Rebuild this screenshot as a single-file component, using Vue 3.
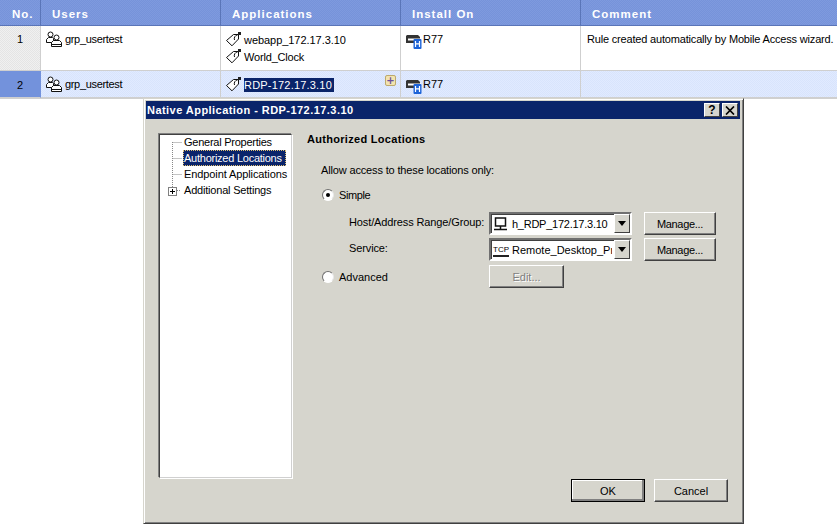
<script setup>
const gridCols = ['No.', 'Users', 'Applications', 'Install On', 'Comment']
</script>

<template>
  <div class="page">
    <div class="grid">
      <div class="head no">No.</div>
      <div class="head">{{ gridCols[1] }}</div>
      <div class="head">{{ gridCols[2] }}</div>
      <div class="head">{{ gridCols[3] }}</div>
      <div class="head last">{{ gridCols[4] }}</div>

      <div class="cell num">1</div>
      <div class="cell"><div class="item"><svg class="ic users" viewBox="0 0 17 16"><use href="#ug" /></svg><span class="grp">grp_usertest</span></div></div>
      <div class="cell">
        <div class="item app"><svg class="ic" viewBox="0 0 16 16"><use href="#tag" /></svg><span class="t-web">webapp_172.17.3.10</span></div>
        <div class="item app"><svg class="ic" viewBox="0 0 16 16"><use href="#tag" /></svg><span class="t-wc">World_Clock</span></div>
      </div>
      <div class="cell"><div class="item gw"><svg class="ic gwi" viewBox="0 0 17 16"><use href="#gw" /></svg><span>R77</span></div></div>
      <div class="cell last"><span class="comment">Rule created automatically by Mobile Access wizard.</span></div>

      <div class="cell num sel">2</div>
      <div class="cell hl"><div class="item"><svg class="ic users" viewBox="0 0 17 16"><use href="#ug" /></svg><span class="grp">grp_usertest</span></div></div>
      <div class="cell hl appcell">
        <div class="item app"><svg class="ic" viewBox="0 0 16 16"><use href="#tag" /></svg><span class="mark">RDP-172.17.3.10</span></div>
        <span class="plus">+</span>
      </div>
      <div class="cell hl"><div class="item gw"><svg class="ic gwi" viewBox="0 0 17 16"><use href="#gw" /></svg><span>R77</span></div></div>
      <div class="cell hl last"></div>
    </div>

    <svg class="defs" width="0" height="0">
      <defs>
        <g id="ug" fill="#fff" stroke="#111" stroke-width="1">
          <circle cx="5.500" cy="3.500" r="2.500" />
          <path d="M1.500 11.500v-3l2-2h4l1 1v4z" />
          <circle cx="11.500" cy="6.500" r="2.500" />
          <path d="M6.500 15.500v-4l2-2h6l2 2v4zM6.500 13.500h10" />
        </g>
        <g id="tag" fill="#fff" stroke="#111" stroke-width="1">
          <path d="M.5 8.500 7.500 2.500h5v4.500l-6.500 6.800z" />
          <path d="M8.500 8c-.8-2.500.5-4.500 3.500-5.500l2-1.500" fill="none" />
          <path d="M12 0h3v3h-3z" fill="#222" stroke="none" />
        </g>
        <g id="gw">
          <path d="M2 2h11l2 2v6H1V3z" fill="#333" />
          <path d="M3 5.500h13v2H3z" fill="#fff" />
          <rect x="8.500" y="6" width="8" height="10" rx="1" fill="#1c63d8" />
          <path d="M10.500 8v6M14.500 8v6M10.500 10.800h4" stroke="#fff" stroke-width="1.200" fill="none" />
        </g>
      </defs>
    </svg>

    <section class="dialog">
      <header class="titlebar">
        <span class="title">Native Application - RDP-172.17.3.10</span>
        <div class="caps">
          <span class="cap">?</span>
          <span class="cap x">
            <svg viewBox="0 0 10 9" width="10" height="9"><path d="M1 0.500 9 8.500M9 0.500 1 8.500" stroke="#000" stroke-width="1.700" /></svg>
          </span>
        </div>
      </header>

      <div class="body">
        <div class="main">
          <nav class="tree">
            <svg class="dots" width="12" height="50" viewBox="0 0 12 50">
              <path d="M.5 0v45M.5 .5h9M.5 16.500h9M.5 32.500h9M5 48.500h4" stroke="#888" stroke-dasharray="1 1" fill="none" />
            </svg>
            <span class="node n1">General Properties</span>
            <span class="node n2">Authorized Locations</span>
            <span class="node n3">Endpoint Applications</span>
            <span class="node n4">Additional Settings</span>
            <span class="expander"></span>
          </nav>

          <div class="panel">
            <h2>Authorized Locations</h2>
            <p class="lead">Allow access to these locations only:</p>
            <div class="form">
              <label class="radio-row simple"><span class="radio on"></span><span class="t-simple">Simple</span></label>
              <div class="row host">
                <span class="lbl">Host/Address Range/Group:</span>
                <div class="combo">
                  <svg class="net" width="15" height="14" viewBox="0 0 15 14">
                    <path d="M2.500 1h10v8h-10z" fill="#fff" stroke="#111" stroke-width="1.500" />
                    <path d="M7.500 9v3M1 12.500h13" stroke="#111" stroke-width="1.500" />
                  </svg>
                  <span class="val hostval">h_RDP_172.17.3.10</span>
                  <span class="arrow"></span>
                </div>
                <button class="btn manage">Manage...</button>
              </div>
              <div class="row service">
                <span class="lbl">Service:</span>
                <div class="combo">
                  <span class="tcp">TCP</span>
                  <span class="val clip">Remote_Desktop_Protocol</span>
                  <span class="arrow"></span>
                </div>
                <button class="btn manage">Manage...</button>
              </div>
              <div class="row adv">
                <label class="radio-row"><span class="radio"></span>Advanced</label>
                <button class="btn edit" disabled>Edit...</button>
              </div>
            </div>
          </div>
        </div>
        <footer class="actions">
          <button class="btn dlg default">OK</button>
          <button class="btn dlg">Cancel</button>
        </footer>
      </div>
    </section>
  </div>
</template>

<style>
body { margin: 0; background: #fff; }
</style>

<style scoped>
.page {
  position: relative;
  width: 837px;
  height: 532px;
  overflow: hidden;
  background: #fff;
  font-family: "Liberation Sans", Arial, sans-serif;
  font-size: 11px;
  color: #000;
}
.defs { position: absolute; }
.grid {
  display: grid;
  grid-template-columns: 41px 180px 180px 180px 256px;
  grid-template-rows: 26px 45px 27px;
  border-bottom: 1px solid #d0d0d0;
}
.head {
  background: #7a96db conic-gradient(#7f9ade 25%, #7693da 0 50%, #7f9ade 0 75%, #7693da 0) 0 0 / 2px 2px;
  border-right: 1px solid #5a75b8;
  border-bottom: 1px solid #5a75b8;
  color: #fff;
  font-family: "Liberation Sans", sans-serif;
  font-weight: 700;
  font-size: 11.5px;
  line-height: 14px;
  letter-spacing: 1px;
  padding: 7px 0 0 11px;
  box-sizing: border-box;
}
.head.no { padding-left: 12px; }
.head.last, .cell.last { border-right: 0; }
.cell {
  border-right: 1px solid #cfcfcf;
  border-bottom: 1px solid #cfcfcf;
  box-sizing: border-box;
  padding: 6px 0 0 4px;
  line-height: 14px;
  min-width: 0;
}
.cell.num {
  text-align: center;
  background: #ececec conic-gradient(#f0f0f0 25%, #e4e4e4 0 50%, #f0f0f0 0 75%, #e4e4e4 0) 0 0 / 2px 2px;
  padding: 6px 0 0;
}
.cell.num.sel {
  background: #7392dc;
  border-right-color: #7392dc;
  padding-top: 7px;
}
.cell.hl {
  background: #dce7ff conic-gradient(#e1eaff 25%, #d8e4fc 0 50%, #e1eaff 0 75%, #d8e4fc 0) 0 0 / 2px 2px;
  padding-top: 6px;
}
.comment { padding-left: 2px; white-space: nowrap; letter-spacing: -0.18px; }
.grp { letter-spacing: -0.33px; }
.t-web { letter-spacing: -0.05px; }
.t-wc { letter-spacing: -0.18px; }
.item { display: flex; align-items: center; gap: 3px; height: 14px; white-space: nowrap; }
.item.app { height: 18px; margin-top: -1px; gap: 2px; padding-left: 1px; }
.ic { width: 16px; height: 16px; flex: none; overflow: visible; }
.users { width: 17px; }
.gw { gap: 1px; }
.gwi { width: 17px; margin-top: 3px; }
.mark {
  background: #0a246a;
  color: #fff;
  width: 90px;
  line-height: 14px;
  letter-spacing: 0.2px;
}
.appcell { position: relative; }
.plus {
  position: absolute;
  right: 4px;
  top: 4px;
  width: 9px;
  height: 9px;
  border: 1px solid #bda96c;
  border-radius: 2px;
  background: #f2e3b0;
  color: #6a4f9a;
  font: 700 10px/9px "DejaVu Sans", sans-serif;
  text-align: center;
}

.dialog {
  position: absolute;
  left: 143px;
  top: 98px;
  width: 601px;
  height: 426px;
  box-sizing: border-box;
  background: #d6d5cd;
  border: 1px solid #d6d5cd;
  border-right-color: #404040;
  border-bottom-color: #404040;
  box-shadow: inset 1px 1px 0 #fff, inset -1px -1px 0 #808080;
  padding: 2px 3px 3px 2px;
  display: flex;
  flex-direction: column;
}
.titlebar {
  height: 18px;
  flex: none;
  background: #0a246a;
  color: #fff;
  display: flex;
  align-items: center;
  justify-content: space-between;
  padding: 0 2px 0 1px;
}
.title { font-family: "Liberation Sans", sans-serif; font-weight: 700; font-size: 11px; letter-spacing: 0.45px; }
.caps { display: flex; gap: 2px; }
.cap {
  width: 16px;
  height: 14px;
  box-sizing: border-box;
  background: #d6d5cd;
  border: 1px solid;
  border-color: #fff #404040 #404040 #fff;
  color: #000;
  font: 700 12px/12px "Liberation Sans", sans-serif;
  text-align: center;
  display: flex;
  align-items: center;
  justify-content: center;
}
.body { flex: 1; display: flex; flex-direction: column; padding: 13px 12px 18px 13px; min-height: 0; }
.main { flex: 1; display: flex; min-height: 0; }
.tree {
  position: relative;
  width: 133px;
  box-sizing: border-box;
  height: 344px;
  margin-top: 2px;
  background: #fff;
  border: 1px solid;
  border-color: #404040 #d0d0d0 #d0d0d0 #404040;
  box-shadow: -1px -1px 0 #808080, 1px 1px 0 #fff;
  flex: none;
}
.dots { position: absolute; left: 12px; top: 7px; }
.node { position: absolute; left: 24px; white-space: nowrap; line-height: 14px; letter-spacing: -0.25px; }
.n1 { top: 0; }
.n2 {
  top: 15px;
  left: 23px;
  height: 16px;
  width: 103px;
  line-height: 16px;
  background: #0a246a;
  color: #fff;
  outline: 1px dotted #e0c070;
  outline-offset: -1px;
  padding-left: 1px;
  box-sizing: border-box;
}
.n3 { top: 32px; letter-spacing: -0.1px; }
.n4 { top: 48px; letter-spacing: -0.2px; }
.expander {
  position: absolute;
  left: 8px;
  top: 52px;
  width: 9px;
  height: 9px;
  box-sizing: border-box;
  border: 1px solid #808080;
  background:
    linear-gradient(#000, #000) center / 5px 1px no-repeat,
    linear-gradient(#000, #000) center / 1px 5px no-repeat,
    #fff;
}
.panel { margin-left: 15px; flex: 1; min-width: 0; }
h2 { margin: 0; font-size: 11px; line-height: 14px; font-weight: 700; letter-spacing: 0.3px; font-family: "Liberation Sans", sans-serif; }
.lead { margin: 17px 0 0 14px; line-height: 14px; letter-spacing: -0.15px; }
.form { margin: 11px 0 0 15px; }
.radio-row { display: flex; align-items: center; gap: 5px; line-height: 14px; }
.t-simple { letter-spacing: -0.4px; }
.radio {
  display: block;
  width: 12px;
  height: 12px;
  box-sizing: border-box;
  border-radius: 50%;
  background: #fff;
  border: 1px solid;
  border-color: #707070 #e8e8e8 #fff #707070;
  position: relative;
  flex: none;
}
.radio.on::after {
  content: "";
  position: absolute;
  left: 3px;
  top: 3px;
  width: 4px;
  height: 4px;
  border-radius: 50%;
  background: #000;
}
.simple { height: 14px; }
.row { display: flex; align-items: flex-start; }
.host { margin-top: 10px; }
.service { margin-top: 3px; }
.adv { margin-top: 4px; }
.lbl {
  width: 167px;
  box-sizing: border-box;
  padding: 3px 0 0 27px;
  white-space: nowrap;
  line-height: 14px;
  letter-spacing: -0.12px;
  flex: none;
}
.adv .radio-row { width: 167px; padding-top: 5px; flex: none; }
.combo {
  width: 143px;
  height: 23px;
  box-sizing: border-box;
  background: #fff;
  border: 2px solid;
  border-color: #707070 #fff #fff #707070;
  box-shadow: inset 1px 1px 0 #404040;
  display: flex;
  align-items: center;
  padding-left: 2px;
  position: relative;
  flex: none;
  margin-right: 12px;
}
.net { flex: none; }
.val { margin-left: 4px; white-space: nowrap; }
.hostval { letter-spacing: -0.25px; }
.service .val { margin-left: 3px; }
.clip { width: 100px; overflow: hidden; }
.tcp {
  font: 8px/9px "Liberation Sans", sans-serif;
  width: 16px;
  border-bottom: 2px solid #222;
  padding-bottom: 1px;
  margin-top: 3px;
  flex: none;
}
.arrow {
  position: absolute;
  right: 0;
  top: 0;
  width: 16px;
  height: 19px;
  box-sizing: border-box;
  background: #d6d5cd;
  border: 1px solid;
  border-color: #fff #404040 #404040 #fff;
}
.arrow::after {
  content: "";
  position: absolute;
  left: 3px;
  top: 6px;
  border: 4px solid transparent;
  border-top: 5px solid #000;
  border-bottom: 0;
}
.btn {
  font: 11px/14px "Liberation Sans", sans-serif;
  color: #000;
  background: #d6d5cd;
  border: 1px solid;
  border-color: #fff #404040 #404040 #fff;
  box-shadow: inset -1px -1px 0 #808080;
  padding: 0;
  margin: 0;
  box-sizing: border-box;
}
.manage { width: 72px; height: 23px; letter-spacing: -0.3px; }
.edit { width: 75px; height: 23px; color: #808080; text-shadow: 1px 1px 0 #fff; }
.actions { display: flex; justify-content: flex-end; gap: 9px; flex: none; }
.dlg { width: 74px; height: 23px; }
.default { outline: 1px solid #000; outline-offset: -1px; box-shadow: inset -2px -2px 0 #808080, inset 1px 1px 0 #fff; }
</style>
